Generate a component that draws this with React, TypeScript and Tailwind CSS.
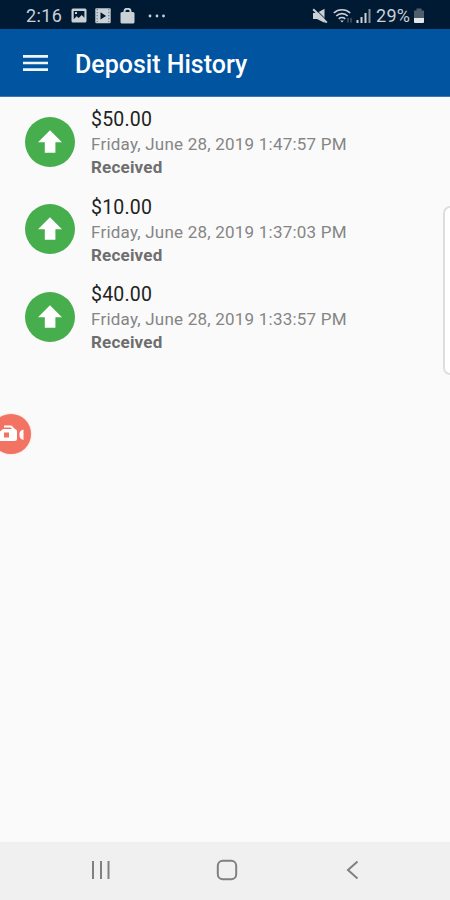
type Deposit = {
  amount: string;
  date: string;
  status: string;
};

const deposits: Deposit[] = [
  {amount: '$50.00', date: 'Friday, June 28, 2019 1:47:57 PM', status: 'Received'},
  {amount: '$10.00', date: 'Friday, June 28, 2019 1:37:03 PM', status: 'Received'},
  {amount: '$40.00', date: 'Friday, June 28, 2019 1:33:57 PM', status: 'Received'},
];

function StatusBar() {
  return (
    <div className="flex h-[29px] shrink-0 items-center justify-between bg-[#001a33] pt-[2px] pr-[25px] pl-[26px] text-[#c9d0d6]">
      <div className="flex items-center">
        <span className="w-[45px] text-[18px] leading-none tracking-[0.35px]">2:16</span>
        <svg width="16" height="16" viewBox="0 0 16 16" fill="currentColor">
          <path
            fillRule="evenodd"
            d="M2 0.5h12a1.5 1.5 0 0 1 1.5 1.5v11a1.5 1.5 0 0 1-1.5 1.5H2A1.5 1.5 0 0 1 .5 13V2A1.5 1.5 0 0 1 2 .5zM2.7 3v8.3l3-3.1 2 1.7 3-2.8 2.7 2.7V3zM4 4h2v2H4z"
          />
        </svg>
        <svg className="ml-[8px]" width="16" height="16" viewBox="0 0 16 16">
          <rect x="0.3" y="0.3" width="15.4" height="15" rx="1" fill="currentColor" />
          <path d="M2.2 1v14M13.8 1v14" stroke="#6c7a87" strokeWidth="1.2" strokeDasharray="1.3 1.7" />
          <path d="M5.5 4.2v7.4l5.6-3.7z" fill="#001a33" />
        </svg>
        <svg className="ml-[9px]" width="15" height="16" viewBox="0 0 15 16">
          <rect x="0.5" y="4" width="14" height="11.5" rx="1.5" fill="currentColor" />
          <path d="M4.5 5V3a3 2.2 0 0 1 6 0v2" fill="none" stroke="currentColor" strokeWidth="2" />
        </svg>
        <svg className="ml-[13px]" width="18" height="4" viewBox="0 0 18 4" fill="currentColor">
          <circle cx="2" cy="2" r="1.4" />
          <circle cx="9" cy="2" r="1.4" />
          <circle cx="15.5" cy="2" r="1.4" />
        </svg>
      </div>
      <div className="flex items-center">
        <svg width="16" height="16" viewBox="0 0 16 16">
          <path d="M1 5h4L12.5 0.8v14L5 11H1z" fill="currentColor" />
          <path d="M3.2 1 15.5 13" stroke="#001a33" strokeWidth="1" />
          <path d="M1.2 1.2 14.8 14.6" stroke="currentColor" strokeWidth="2" />
        </svg>
        <svg className="ml-[5px]" width="20" height="16" viewBox="0 0 20 16" fill="none" stroke="currentColor">
          <path d="M0.8 5a12 12 0 0 1 16.4 0M3.3 8a8 8 0 0 1 11.4 0M5.8 10.8a4.7 4.7 0 0 1 6.4 0" strokeWidth="1.7" />
          <path d="m7.2 12.5 1.8 2 1.8-2z" fill="currentColor" stroke="none" />
          <path d="M15 10v4.5M18 10v4.5" stroke="#45535f" strokeWidth="1.5" />
        </svg>
        <svg className="ml-[3px]" width="16" height="16" viewBox="0 0 16 16">
          <path d="M1.5 12v3M5.5 9v6M9.5 5v10" stroke="currentColor" strokeWidth="2" />
          <path d="M13.5 1v14" stroke="#87929d" strokeWidth="2" />
        </svg>
        <span className="ml-[4px] w-[36px] text-[18px] leading-none tracking-[0.3px]">29%</span>
        <svg className="ml-[1px]" width="12" height="16" viewBox="0 0 12 16">
          <path d="M3.5 0.5h5v2H11V10H1V2.5h2.5z" fill="#4f5e6c" />
          <path d="M1 10h10v4a1 1 0 0 1-1 1H2a1 1 0 0 1-1-1z" fill="#e3e7ea" />
        </svg>
      </div>
    </div>
  );
}

function Header() {
  return (
    <header className="flex h-[68px] shrink-0 items-center border-b border-[#3f77b3] bg-[#01549f] pt-px pl-[23px] text-white">
      <button aria-label="Open menu">
        <svg width="25" height="18" viewBox="0 0 25 18" stroke="#f0f5fb" strokeWidth="2.6">
          <path d="M0 2.4h25M0 9h25M0 15.6h25" />
        </svg>
      </button>
      <h1 className="ml-[27px] pt-[4px] text-[25px] leading-[30px] font-medium whitespace-nowrap">Deposit History</h1>
    </header>
  );
}

function DepositRow({amount, date, status}: Deposit) {
  return (
    <li className="flex h-[87.5px] items-start pl-[25px]">
      <span className="mt-[9.5px] flex size-[50px] items-center justify-center rounded-full bg-[#46ae4c]">
        <svg width="24" height="24" viewBox="0 0 24 24" fill="white">
          <path d="M12 0.3 24 12.2h-6.6v10.6H6.8V12.2H0z" />
        </svg>
      </span>
      <div className="ml-[16px] whitespace-nowrap">
        <p className="text-[19.5px] leading-[25px] tracking-[0.2px] text-[#222222]">{amount}</p>
        <p className="text-[17px] leading-[24px] tracking-[0.22px] text-[#858585]">{date}</p>
        <p className="text-[17px] leading-[22px] font-bold tracking-[0.2px] text-[#6e6e6e]">{status}</p>
      </div>
    </li>
  );
}

function NavigationBar() {
  return (
    <nav className="flex h-[58px] shrink-0 items-center bg-[#f0f0f0] pb-[2px] pl-[91px] text-[#808080]">
      <svg width="20" height="20" viewBox="0 0 20 20" stroke="currentColor" strokeWidth="2">
        <path d="M2 1v18M10 1v18M17.5 1v18" />
      </svg>
      <svg className="ml-[105px]" width="22" height="22" viewBox="0 0 22 22" fill="none" stroke="currentColor" strokeWidth="2">
        <rect x="1.8" y="1.8" width="18.4" height="18.4" rx="5" />
      </svg>
      <svg className="ml-[108px]" width="14" height="20" viewBox="0 0 14 20" fill="none" stroke="currentColor" strokeWidth="2">
        <path d="M11.5 1.5 2 10l9.5 8.5" />
      </svg>
    </nav>
  );
}

function App() {
  return (
    <div className="relative flex h-[900px] w-[450px] flex-col overflow-hidden bg-[#fafafa] font-[Roboto,sans-serif]">
      <StatusBar />
      <Header />
      <main className="flex-1 pt-[10px]">
        <ul>
          {deposits.map((deposit) => (
            <DepositRow key={deposit.date} {...deposit} />
          ))}
        </ul>
      </main>
      <NavigationBar />

      {/* edge panel handle */}
      <div className="absolute top-[206px] -right-[10px] h-[169px] w-[17px] rounded-[7px] border-2 border-[#dedede] bg-white" />

      {/* screen recorder bubble */}
      <div className="absolute top-[414px] -left-[9px] flex size-[40px] items-center justify-end rounded-full bg-[#f27363] pr-[7px] shadow-[0_0_2px_#f2736366]">
        <svg width="24" height="20" viewBox="0 0 24 20">
          <path d="M4 2.5h7l3 3" fill="none" stroke="white" strokeWidth="2" />
          <path d="M0 7.5 3 5h11.5A2.5 2.5 0 0 1 17 7.5v7a2.5 2.5 0 0 1-2.5 2.5H0z" fill="white" />
          <path d="M23.5 5.5v10.5a5 5 0 0 1-4-5.2 5 5 0 0 1 4-5.3z" fill="white" />
          <rect x="4" y="8.5" width="5" height="5" fill="#f27363" />
        </svg>
      </div>
    </div>
  );
}

export default App;
